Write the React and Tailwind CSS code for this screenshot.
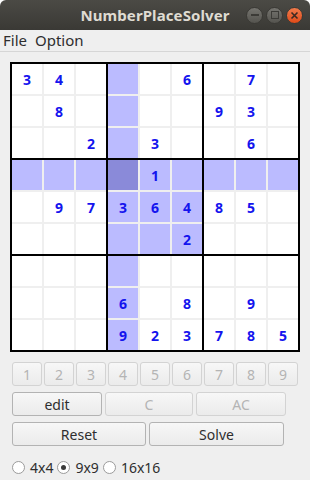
import React from "react";

const BOARD = [
  [3, 4, 0, 0, 0, 6, 0, 7, 0],
  [0, 8, 0, 0, 0, 0, 9, 3, 0],
  [0, 0, 2, 0, 3, 0, 0, 6, 0],
  [0, 0, 0, 0, 1, 0, 0, 0, 0],
  [0, 9, 7, 3, 6, 4, 8, 5, 0],
  [0, 0, 0, 0, 0, 2, 0, 0, 0],
  [0, 0, 0, 0, 0, 0, 0, 0, 0],
  [0, 0, 0, 6, 0, 8, 0, 9, 0],
  [0, 0, 0, 9, 2, 3, 7, 8, 5],
];

const SEL = { r: 3, c: 3 };

function cellBg(r, c) {
  if (r === SEL.r && c === SEL.c) return "bg-[#8a8ad9]";
  const sameBox =
    Math.floor(r / 3) === Math.floor(SEL.r / 3) &&
    Math.floor(c / 3) === Math.floor(SEL.c / 3);
  if (r === SEL.r || c === SEL.c || sameBox) return "bg-[#bbbbff]";
  return "bg-white";
}

function TitleBar() {
  return (
    <div className="h-[30px] rounded-t-[6px] bg-gradient-to-b from-[#4b4a45] to-[#3a3935] grid grid-cols-[1fr_auto_1fr] items-center">
      <div />
      <div className="text-[15px] font-bold text-[#dfdbd2] tracking-[0.1px]">
        NumberPlaceSolver
      </div>
      <div className="flex justify-end items-center gap-[3px] pr-[7px]">
        <div className="w-[17px] h-[17px] rounded-full bg-gradient-to-b from-[#75746f] to-[#55544f] border border-[#3a3935] flex items-center justify-center">
          <div className="w-[8px] h-[2px] bg-[#3c3b37]" />
        </div>
        <div className="w-[17px] h-[17px] rounded-full bg-gradient-to-b from-[#75746f] to-[#55544f] border border-[#3a3935] flex items-center justify-center">
          <div className="w-[8px] h-[8px] border-[1.5px] border-[#3c3b37]" />
        </div>
        <div className="w-[17px] h-[17px] rounded-full bg-gradient-to-b from-[#f07a4a] to-[#df4a16] border border-[#3a3935] flex items-center justify-center">
          <svg width="9" height="9" viewBox="0 0 9 9">
            <path d="M1.5 1.5 L7.5 7.5 M7.5 1.5 L1.5 7.5" stroke="#3c2a22" strokeWidth="1.6" />
          </svg>
        </div>
      </div>
    </div>
  );
}

function Board() {
  const boxes = [];
  for (let br = 0; br < 3; br++) {
    for (let bc = 0; bc < 3; bc++) {
      const cells = [];
      for (let i = 0; i < 3; i++) {
        for (let j = 0; j < 3; j++) {
          const r = br * 3 + i;
          const c = bc * 3 + j;
          const v = BOARD[r][c];
          cells.push(
            <div
              key={`${r}-${c}`}
              className={`h-[30px] flex items-center justify-center text-[14px] font-bold text-[#1414ee] ${cellBg(r, c)}`}
            >
              {v || ""}
            </div>
          );
        }
      }
      boxes.push(
        <div key={`${br}-${bc}`} className="grid grid-cols-3 gap-[2px] bg-[#efefef]">
          {cells}
        </div>
      );
    }
  }
  return (
    <div className="ml-[10px] mt-[10px] w-[290px] grid grid-cols-3 gap-[2px] bg-black p-[2px]">
      {boxes}
    </div>
  );
}

function Btn({ children, disabled, className = "" }) {
  return (
    <div
      className={`h-[24px] flex items-center justify-center rounded-[3px] border text-[14px] bg-gradient-to-b from-[#f7f7f7] to-[#ebebeb] ${
        disabled
          ? "border-[#d3d3d3] text-[#b4b4b4]"
          : "border-[#b3b3b3] text-[#2e2e2e]"
      } ${className}`}
    >
      {children}
    </div>
  );
}

function Radio({ checked, label }) {
  return (
    <div className="flex items-center gap-[5px]">
      <div className="w-[13px] h-[13px] rounded-full border border-[#9b9b9b] bg-white flex items-center justify-center">
        {checked && <div className="w-[5px] h-[5px] rounded-full bg-[#3a3a3a]" />}
      </div>
      <span className="text-[14px] text-[#2e2e2e]">{label}</span>
    </div>
  );
}

export default function App() {
  return (
    <div className="w-[310px] h-[480px] bg-white overflow-hidden font-['Noto_Sans',sans-serif]">
      <TitleBar />
      <div className="h-[450px] bg-[#efefef]">
        <div className="h-[22px] flex items-center gap-[8px] pl-[3px] border-b border-[#d6d6d6] text-[15px] text-[#2e2e2e]">
          <span>File</span>
          <span>Option</span>
        </div>
        <Board />
        <div className="pl-[12px] pt-[10px] flex flex-col gap-[6px]">
          <div className="flex gap-[2px]">
            {[1, 2, 3, 4, 5, 6, 7, 8, 9].map((n) => (
              <Btn key={n} disabled className="w-[30px]">
                {n}
              </Btn>
            ))}
          </div>
          <div className="flex gap-[3px]">
            <Btn className="w-[90px]">edit</Btn>
            <Btn disabled className="w-[88px]">C</Btn>
            <Btn disabled className="w-[90px]">AC</Btn>
          </div>
          <div className="flex gap-[3px]">
            <Btn className="w-[134px]">Reset</Btn>
            <Btn className="w-[135px]">Solve</Btn>
          </div>
          <div className="flex items-center gap-[4px] pt-[5px]">
            <Radio label="4x4" />
            <Radio checked label="9x9" />
            <Radio label="16x16" />
          </div>
        </div>
      </div>
    </div>
  );
}
